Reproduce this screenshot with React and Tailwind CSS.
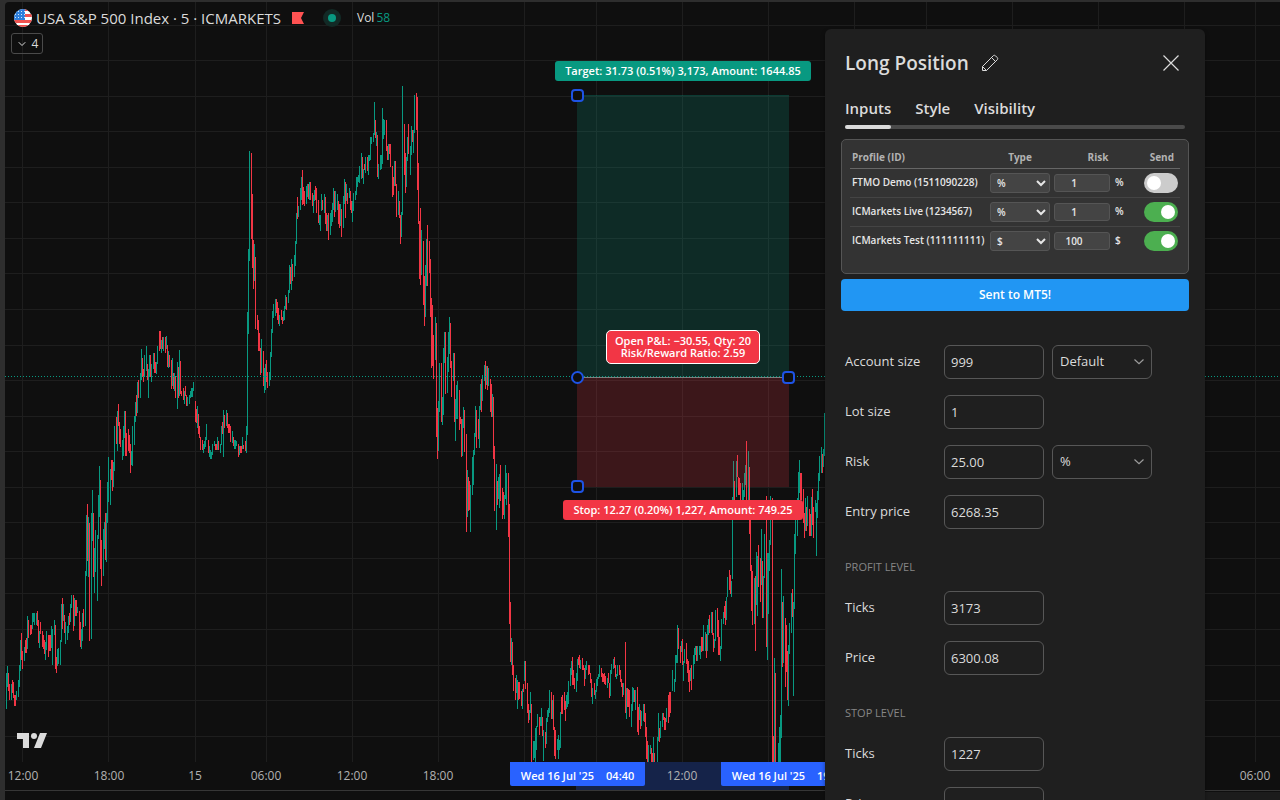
import { useState } from "react";
import { ChevronDown } from "lucide-react";

// price bars as [x, high, low], a negative x marks a falling bar
const BARS = [
  [6,673,709],[7,666,687],[-8,673,691],[-9,684,700],[11,684,700],[-12,680,693],[-13,682,698],[-14,695,706],[-15,695,706],[16,691,700],
  [18,680,697],[19,665,687],[20,640,671],[-21,633,660],[-22,651,669],[24,647,661],[-25,640,653],[-26,638,653],[27,616,649],[-28,620,638],
  [-30,625,635],[-31,625,634],[32,613,629],[33,613,622],[34,613,625],[36,613,625],[-37,611,626],[-38,620,643],[39,631,648],[-40,622,634],
  [-42,631,647],[-43,635,649],[-44,640,654],[45,642,660],[46,631,650],[-48,635,657],[-49,635,651],[-50,635,651],[51,626,648],[52,629,665],
  [54,620,635],[-55,625,669],[-56,657,673],[57,649,666],[58,648,664],[60,640,665],[61,604,642],[-62,598,629],[63,604,621],[-64,615,633],
  [65,622,644],[67,626,640],[68,616,633],[-69,613,625],[70,604,622],[71,595,608],[-73,595,631],[74,598,626],[-75,600,616],[-76,600,616],
  [77,607,613],[-79,611,640],[-80,622,647],[81,629,649],[82,613,641],[-83,609,627],[85,571,626],[86,515,576],[-87,504,561],[88,517,577],
  [-89,523,641],[91,513,639],[92,490,541],[-93,513,577],[94,548,593],[95,530,572],[97,535,601],[98,495,539],[99,466,517],[-100,480,569],
  [-101,540,586],[103,529,576],[104,522,549],[-105,513,560],[106,513,562],[107,482,523],[108,457,502],[110,469,505],[-111,460,480],[-112,460,491],
  [113,462,487],[114,426,471],[-116,417,444],[117,411,451],[-118,404,426],[-119,422,444],[-120,429,447],[122,440,460],[123,426,456],[124,411,438],
  [-125,411,456],[-126,433,456],[-128,429,451],[-129,435,453],[-130,444,473],[131,451,465],[132,426,466],[134,416,445],[135,402,422],[-136,395,416],
  [137,382,413],[-138,380,398],[140,373,398],[141,349,380],[-142,358,377],[-143,369,382],[144,355,377],[146,346,371],[-147,364,380],[148,369,398],
  [149,355,377],[-150,355,377],[151,364,382],[153,353,369],[-154,353,373],[-155,362,373],[156,362,374],[157,346,364],[-159,331,351],[-160,331,349],
  [161,340,353],[-162,337,349],[163,337,351],[-165,337,353],[166,336,349],[-167,345,367],[168,351,368],[-169,355,367],[-171,360,389],[172,358,386],
  [-173,373,389],[174,373,391],[-175,376,398],[177,362,409],[-178,367,398],[179,350,396],[-180,361,394],[-181,391,396],[-183,388,400],[184,391,404],
  [-185,386,396],[-186,395,406],[187,397,406],[189,395,404],[190,391,398],[191,388,397],[192,388,397],[193,382,391],[-195,401,422],[-196,409,423],
  [197,406,428],[-198,414,434],[-199,426,438],[-200,437,450],[-202,440,450],[203,444,453],[204,441,449],[205,437,447],[206,424,440],[-208,440,453],
  [209,446,457],[210,450,459],[211,452,459],[212,444,455],[214,441,446],[-215,444,450],[-216,444,450],[217,437,450],[-218,441,450],[220,444,453],
  [221,426,445],[-222,422,434],[223,410,457],[-224,415,428],[226,410,426],[-227,413,428],[-228,424,433],[-229,424,433],[-230,426,442],[232,431,443],
  [-233,437,446],[234,440,449],[235,440,449],[236,441,446],[-238,444,457],[239,446,455],[-240,446,453],[-241,446,453],[242,437,449],[-243,445,449],
  [-245,441,451],[246,426,453],[247,312,435],[248,249,334],[249,151,261],[-251,153,239],[-252,194,268],[-253,240,289],[254,244,281],[-255,257,329],
  [-257,315,330],[-258,320,351],[-259,333,351],[-260,348,375],[261,339,373],[-263,351,386],[264,368,393],[265,364,390],[-266,360,382],[-267,372,388],
  [269,372,386],[270,352,380],[271,329,357],[272,311,333],[273,304,318],[275,299,316],[-276,299,313],[-277,302,320],[-278,308,324],[279,315,326],
  [-281,310,320],[-282,317,324],[283,311,321],[284,306,320],[285,295,309],[-286,297,310],[288,290,303],[289,265,293],[-290,267,284],[291,259,290],
  [-292,264,281],[294,255,277],[295,241,266],[296,213,244],[-297,197,219],[298,206,217],[300,188,210],[301,177,200],[-302,170,205],[-303,187,204],
  [-304,191,206],[306,186,204],[307,184,197],[-308,184,199],[309,182,200],[-310,182,200],[-312,193,206],[313,195,213],[314,190,201],[-315,186,200],
  [-316,188,213],[-318,200,223],[319,215,225],[320,215,231],[321,194,211],[-322,200,210],[324,194,213],[-325,197,224],[-326,213,231],[327,215,231],
  [-328,213,240],[330,213,235],[331,210,226],[332,203,222],[333,188,210],[-334,191,217],[335,191,212],[337,194,210],[-338,201,224],[-339,204,228],
  [340,204,226],[-341,209,237],[343,196,228],[344,179,204],[-345,182,218],[346,184,201],[-347,193,204],[349,188,198],[-350,191,210],[-351,201,213],
  [352,201,222],[353,193,211],[355,191,200],[356,177,195],[357,177,187],[358,175,182],[359,166,183],[361,153,179],[-362,157,178],[363,169,184],
  [-364,164,170],[365,157,173],[-367,157,171],[368,155,175],[369,155,161],[370,137,160],[371,137,144],[373,133,142],[374,102,135],[-375,120,138],
  [376,132,146],[-377,135,177],[378,164,179],[380,155,170],[381,155,169],[382,108,164],[383,119,139],[384,120,135],[-386,120,151],[-387,146,160],
  [388,144,160],[-389,144,154],[-390,144,167],[-392,166,197],[-393,177,195],[394,161,186],[-395,161,186],[-396,184,217],[398,191,215],[-399,201,218],
  [-400,215,244],[401,212,237],[402,86,215],[-404,124,175],[-405,153,193],[406,157,187],[407,137,161],[-408,124,154],[410,146,175],[411,126,155],
  [-412,130,142],[413,130,153],[414,95,133],[-416,93,130],[-417,97,190],[-418,163,224],[-419,221,279],[-420,208,285],[421,230,275],[-423,241,305],
  [-424,276,326],[425,265,317],[426,239,286],[-427,225,286],[-429,241,273],[-430,259,317],[-431,298,368],[-432,305,366],[-433,335,379],[435,317,360],
  [-436,323,437],[-437,408,459],[438,401,451],[439,363,412],[-441,363,422],[442,397,425],[443,348,415],[444,332,363],[-445,332,394],[447,357,393],
  [448,332,372],[449,317,354],[-450,323,368],[-451,361,397],[453,353,381],[-454,353,422],[455,399,441],[456,385,419],[457,381,419],[-459,390,430],
  [-460,417,424],[-461,419,457],[462,419,456],[463,407,428],[-464,410,452],[-466,434,532],[467,470,517],[-468,477,511],[-469,481,510],[470,485,532],
  [472,457,495],[473,450,485],[474,433,455],[475,406,437],[-476,410,448],[-478,419,439],[479,406,448],[480,384,410],[-481,379,412],[482,375,401],
  [484,365,381],[-485,361,389],[486,366,385],[-487,366,390],[488,368,386],[-490,379,412],[-491,384,417],[492,394,417],[-493,397,459],[-494,446,511],
  [496,464,530],[-497,481,505],[498,477,499],[499,474,508],[-500,465,501],[-502,488,519],[-503,492,515],[504,495,519],[505,465,499],[506,473,505],
  [-508,473,537],[-509,504,624],[-510,602,662],[511,638,665],[-512,642,675],[-513,665,691],[-515,678,700],[516,675,693],[517,680,709],[-518,682,700],
  [-519,682,699],[-521,691,706],[522,689,709],[-523,684,692],[524,661,681],[-525,661,689],[-527,683,713],[-528,704,723],[529,710,720],[530,692,713],
  [-531,704,762],[533,741,760],[534,741,758],[535,728,762],[536,726,750],[537,714,727],[-539,717,735],[540,717,726],[541,708,726],[-542,717,736],
  [543,730,761],[-545,732,748],[546,718,744],[547,710,722],[548,708,717],[549,690,713],[-551,692,719],[552,700,719],[-553,695,730],[-554,727,756],
  [-555,730,759],[557,739,750],[558,735,759],[559,740,750],[560,712,748],[-561,697,714],[-562,695,714],[-564,692,710],[-565,701,721],[566,695,709],
  [567,692,707],[568,681,704],[570,668,686],[571,661,675],[-572,657,685],[-573,670,685],[-574,678,689],[576,673,692],[577,659,681],[-578,657,665],
  [-579,655,668],[580,660,669],[-582,658,670],[-583,665,670],[-584,668,686],[585,665,679],[586,661,670],[-588,665,675],[-589,665,674],[-590,673,683],
  [-591,679,697],[592,688,704],[-594,683,695],[595,690,699],[596,679,692],[597,677,686],[598,674,679],[599,665,677],[-601,668,677],[-602,673,682],
  [-603,674,682],[-604,673,684],[-605,676,685],[607,678,688],[-608,673,683],[-609,683,698],[610,670,696],[611,664,674],[613,659,669],[-614,657,668],
  [-615,665,677],[616,674,679],[617,665,676],[-619,665,675],[-620,670,682],[-621,679,687],[-622,683,697],[623,683,695],[-625,642,713],[626,688,719],
  [-627,688,707],[-628,689,707],[-629,690,717],[631,704,727],[632,687,711],[633,688,702],[-634,690,702],[635,690,710],[-637,687,732],[-638,707,735],
  [639,704,720],[-640,710,729],[641,711,726],[643,704,721],[-644,704,722],[-645,713,737],[-646,727,759],[-647,741,762],[648,745,762],[650,745,754],
  [-651,748,762],[-652,753,762],[653,737,762],[-654,753,762],[657,737,762],[658,713,741],[-659,728,742],[660,721,738],[662,713,727],[-663,713,720],
  [-664,717,730],[-665,718,730],[666,708,722],[-668,695,723],[-669,692,717],[-670,692,713],[672,670,691],[674,679,692],[675,655,682],[676,655,663],
  [677,625,663],[-678,628,649],[-680,646,663],[681,641,652],[-682,639,665],[683,661,681],[684,649,663],[-686,643,664],[-687,659,673],[-688,661,682],
  [-689,670,692],[690,668,681],[-691,665,690],[693,655,679],[694,648,664],[695,646,655],[-696,646,661],[697,646,661],[699,646,655],[700,646,659],
  [-701,637,652],[-702,637,651],[703,625,651],[705,632,651],[-706,634,658],[707,625,651],[708,619,635],[-709,615,633],[711,612,633],[-712,612,635],
  [-713,633,652],[714,639,648],[715,610,641],[-717,608,637],[-718,620,655],[-719,637,655],[720,646,661],[721,619,649],[723,612,624],[-724,606,618],
  [-725,601,625],[726,597,620],[727,577,597],[-729,570,590],[-730,575,594],[731,581,597],[732,497,579],[733,461,505],[-734,481,500],[736,461,497],
  [-737,455,477],[-738,477,495],[-739,478,495],[-740,483,500],[742,483,500],[743,490,500],[744,473,497],[745,465,485],[-746,441,500],[748,451,500],
  [-749,467,534],[-750,520,571],[-751,565,611],[-752,571,625],[754,578,624],[-755,576,651],[756,552,605],[757,556,616],[-758,545,587],[-760,558,602],
  [761,529,585],[-762,561,618],[763,576,618],[764,534,578],[-766,496,647],[767,553,660],[768,553,614],[769,540,571],[770,496,545],[-772,498,762],
  [-773,736,762],[774,658,762],[-775,673,762],[778,743,762],[779,727,762],[780,715,762],[781,569,738],[-782,602,667],[783,596,663],[-785,618,687],
  [-786,625,672],[-787,651,700],[788,645,706],[789,623,654],[791,593,633],[-792,589,617],[793,602,696],[794,534,609],[795,520,554],[797,498,536],
  [798,472,500],[799,460,493],[-800,473,500],[-801,473,500],[-803,489,523],[-804,513,538],[805,498,531],[-806,507,531],[807,496,526],[-809,509,536],
  [-810,514,536],[811,497,536],[-812,489,525],[-813,507,538],[815,500,512],[816,503,556],[817,491,518],[818,473,500],[819,456,481],[821,447,473],
  [-822,454,473],[823,449,467],[824,413,456],
];

const toPath = (bars) =>
  bars.map(([x, top, bottom]) => `M${Math.abs(x)} ${top}h1V${bottom}h-1z`).join("");

const UP_PATH = toPath(BARS.filter(([x]) => x > 0));
const DOWN_PATH = toPath(BARS.filter(([x]) => x < 0));

const GRID_Y = [25, 60, 96, 131, 167, 202, 238, 273, 309, 345, 380, 416, 451, 487, 522, 558, 593, 629, 665, 700, 736];
const GRID_X = [22, 108, 195, 266, 352, 438, 524, 596, 682, 768, 854, 926, 1012, 1098, 1184, 1255];

const TIMES = [
  { x: 23, label: "12:00" },
  { x: 109, label: "18:00" },
  { x: 195, label: "15" },
  { x: 266, label: "06:00" },
  { x: 352, label: "12:00" },
  { x: 438, label: "18:00" },
  { x: 682, label: "12:00" },
  { x: 1255, label: "06:00" },
];

const PROFILES = [
  { id: "1511090228", name: "FTMO Demo", type: "%", risk: "1", send: false },
  { id: "1234567", name: "ICMarkets Live", type: "%", risk: "1", send: true },
  { id: "111111111", name: "ICMarkets Test", type: "$", risk: "100", send: true },
];

function Chart() {
  return (
    <svg className="absolute inset-0 h-full w-full" shapeRendering="crispEdges" aria-label="Price chart">
      <g fill="#1e1e1e">
        {GRID_Y.map((y) => (
          <rect key={y} x="5" y={y} width="100%" height="1" />
        ))}
        {GRID_X.map((x) => (
          <rect key={x} x={x} y="2" width="1" height="760" />
        ))}
      </g>
      <rect x="576" y="762" width="213" height="28" fill="#152349" />
      <rect x="5" y="790" width="100%" height="1" fill="#363636" />
      <rect x="1205" y="792" width="100%" height="8" fill="#1c1c1c" />
      <path d={UP_PATH} fill="#089981" />
      <path d={DOWN_PATH} fill="#f23645" />
      <rect x="577" y="95" width="212" height="282" fill="#089981" fillOpacity="0.2" />
      <rect x="577" y="95" width="212" height="1" fill="#089981" fillOpacity="0.15" />
      <rect x="577" y="377" width="212" height="110" fill="#f23645" fillOpacity="0.2" />
      <rect x="577" y="377" width="212" height="1" fill="#808080" />
      <line x1="5" x2="100%" y1="376.5" y2="376.5" stroke="#089981" strokeDasharray="1 2" />
      <g fill="#0f0f0f" stroke="#1e53e5" strokeWidth="2" shapeRendering="auto">
        <rect x="572" y="90" width="11" height="11" rx="3" />
        <rect x="572" y="481" width="11" height="11" rx="3" />
        <rect x="783" y="372" width="11" height="11" rx="3" />
        <circle cx="577.5" cy="377.5" r="5.5" />
      </g>
      <g fill="#b2b2b2" fontSize="12" textAnchor="middle">
        {TIMES.map((t) => (
          <text key={t.x} x={t.x} y="780">{t.label}</text>
        ))}
      </g>
      <g fill="#dbdbdb" shapeRendering="auto">
        <path d="M17 733h12v15h-6v-9h-6z" />
        <circle cx="34" cy="736" r="3" />
        <path d="M40 733h7l-6 15h-7z" />
      </g>
    </svg>
  );
}

function FlagIcon() {
  return (
    <svg className="h-[18px] w-[18px] shrink-0" viewBox="0 0 18 18" aria-hidden="true">
      <clipPath id="round">
        <circle cx="9" cy="9" r="9" />
      </clipPath>
      <g clipPath="url(#round)">
        <path fill="#fff" d="M0 0h18v18H0z" />
        <path fill="#f0524f" d="M9 0h9v2H9zM9 5h9v3H9zM0 11h18v3H0zM0 16h18v2H0z" />
        <path fill="#2e7fdc" d="M0 0h11v11H0z" />
        <path stroke="#cfe4fb" strokeDasharray="1 2" d="M1 2.5h10M1 5.5h10M1 8.5h10" />
      </g>
    </svg>
  );
}

function Legend() {
  return (
    <div className="absolute left-[11px] top-2 flex flex-col items-start gap-1">
      <div className="flex h-5 items-center pl-[3px]">
        <FlagIcon />
        <h1 className="ml-1 w-[244px] whitespace-nowrap text-[15px] text-[#dbdbdb]">USA S&amp;P 500 Index · 5 · ICMARKETS</h1>
        <svg className="ml-3 h-3 w-3" viewBox="0 0 12 12" aria-hidden="true">
          <path fill="#ff5252" d="M0 0h12L9 6l3 6H0z" />
        </svg>
        <span className="ml-[19px] flex h-[18px] w-[18px] items-center justify-center rounded-full bg-[#122a26]">
          <span className="h-2 w-2 rounded-full bg-[#089981]" />
        </span>
        <span className="ml-4 text-xs text-[#dbdbdb]">Vol</span>
        <span className="ml-0.5 text-xs text-[#089981]">58</span>
      </div>
      <button className="mt-px flex h-[21px] w-8 items-center justify-center gap-1 rounded-[3px] border border-[#4a4a4a] text-xs text-[#dbdbdb]">
        <ChevronDown size={12} />4
      </button>
    </div>
  );
}

function PositionLabels() {
  return (
    <div className="text-[11px] font-semibold text-white">
      <div className="absolute left-[683px] top-[61px] flex h-5 w-64 -translate-x-1/2 items-center justify-center whitespace-nowrap rounded-[3px] bg-[#089981]">
        Target: 31.73 (0.51%) 3,173, Amount: 1644.85
      </div>
      <div className="absolute left-[683px] top-[330px] flex h-[34px] w-[154px] -translate-x-1/2 flex-col items-center justify-center whitespace-nowrap rounded-[5px] border border-white bg-[#f23645] leading-3">
        <span>Open P&amp;L: −30.55, Qty: 20</span>
        <span>Risk/Reward Ratio: 2.59</span>
      </div>
      <div className="absolute left-[683px] top-[500px] flex h-5 w-60 -translate-x-1/2 items-center justify-center whitespace-nowrap rounded-[3px] bg-[#f23645]">
        Stop: 12.27 (0.20%) 1,227, Amount: 749.25
      </div>
      <div className="absolute left-[510px] top-[762px] flex h-6 w-[135px] items-center justify-center gap-3 whitespace-nowrap rounded-b-[2px] bg-[#2962ff] pt-1">
        <span>Wed 16 Jul '25</span>
        <span>04:40</span>
      </div>
      <div className="absolute left-[721px] top-[762px] flex h-6 w-[135px] items-center justify-center gap-3 whitespace-nowrap rounded-b-[2px] bg-[#2962ff] pt-1">
        <span>Wed 16 Jul '25</span>
        <span>19:20</span>
      </div>
    </div>
  );
}

function Toggle({ checked, onChange, label }) {
  return (
    <label className="relative ml-auto block h-5 w-[34px] cursor-pointer">
      <input type="checkbox" checked={checked} onChange={onChange} aria-label={label} className="peer sr-only" />
      <span className="block h-5 rounded-full bg-[#ccc] peer-checked:bg-[#4caf50]" />
      <span className="absolute left-[3px] top-[3px] h-3.5 w-3.5 rounded-full bg-white peer-checked:left-[17px]" />
    </label>
  );
}

function ProfileTable() {
  const [profiles, setProfiles] = useState(PROFILES);

  const update = (id, field, value) =>
    setProfiles(profiles.map((p) => (p.id === id ? { ...p, [field]: value } : p)));

  return (
    <div className="h-[135px] rounded-[5px] border border-[#555] bg-[#333] px-2 pt-2">
      <table className="w-full table-fixed border-collapse text-[10px] font-semibold">
        <colgroup>
          <col className="w-[140px]" />
          <col className="w-16" />
          <col className="w-[60px]" />
          <col className="w-6" />
          <col />
        </colgroup>
        <thead>
          <tr className="h-5 border-b border-[#666] text-[#b2b2b2]">
            <th className="pl-0.5 text-left">Profile (ID)</th>
            <th className="pr-1 text-center">Type</th>
            <th colSpan={2} className="pl-1 text-center">Risk</th>
            <th className="pr-1.5 text-right">Send</th>
          </tr>
        </thead>
        <tbody>
          {profiles.map((p) => (
            <tr key={p.id} className="h-[29px] border-b border-[#444] text-[#e6e6e6] last:border-b-0">
              <td className="whitespace-nowrap pl-0.5">{p.name} ({p.id})</td>
              <td>
                <select
                  aria-label={`Risk type for ${p.name}`}
                  value={p.type}
                  onChange={(e) => update(p.id, "type", e.target.value)}
                  className="block h-5 w-[60px] rounded-[3px] border border-[#555] bg-[#444] px-0.5"
                >
                  <option>%</option>
                  <option>$</option>
                </select>
              </td>
              <td>
                <input
                  aria-label={`Risk for ${p.name}`}
                  value={p.risk}
                  onChange={(e) => update(p.id, "risk", e.target.value)}
                  className="block h-[18px] w-14 rounded-[3px] border border-[#555] bg-[#444] pr-4 text-center"
                />
              </td>
              <td className="pl-px">{p.type}</td>
              <td className="pr-0.5">
                <Toggle
                  checked={p.send}
                  onChange={(e) => update(p.id, "send", e.target.checked)}
                  label={`Send to ${p.name}`}
                />
              </td>
            </tr>
          ))}
        </tbody>
      </table>
    </div>
  );
}

function Field({ id, label, value, option }) {
  return (
    <div className="flex h-[34px] items-center text-[13px] text-[#dbdbdb]">
      <label htmlFor={id} className="w-[99px] shrink-0">{label}</label>
      <input
        id={id}
        defaultValue={value}
        className="h-full w-[100px] rounded-md border border-[#575757] bg-transparent px-1.5"
      />
      {option && (
        <div className="relative ml-2 h-full w-[100px]">
          <select
            aria-label={`${label} unit`}
            className="h-full w-full appearance-none rounded-md border border-[#575757] bg-[#1f1f1f] px-[7px]"
          >
            <option>{option}</option>
          </select>
          <svg className="pointer-events-none absolute right-2 top-3.5 h-1.5 w-2.5" viewBox="0 0 10 6" fill="none" stroke="#9c9c9c" strokeWidth="1.2" aria-hidden="true">
            <path d="M.5.5 5 4.7 9.5.5" />
          </svg>
        </div>
      )}
    </div>
  );
}

function PositionDialog() {
  return (
    <section
      role="dialog"
      aria-labelledby="dialog-title"
      className="absolute bottom-0 right-[75px] top-[29px] w-[380px] overflow-hidden rounded-t-md bg-[#1f1f1f] px-4 shadow-[0_2px_4px_rgba(0,0,0,0.4)]"
    >
      <header className="flex h-[68px] items-center px-1 text-[#dbdbdb]">
        <h2 id="dialog-title" className="text-[19px] font-semibold">Long Position</h2>
        <button aria-label="Rename" className="ml-3">
          <svg className="h-[18px] w-[18px]" viewBox="0 0 18 18" fill="none" stroke="currentColor" aria-hidden="true">
            <path d="M1.5 12.5 12.2 1.8c.7-.7 1.6-.7 2.3 0l1.7 1.7c.7.7.7 1.6 0 2.3L5.5 16.5h-4zM10.5 3.5l4 4M1.5 12.5l4 4" />
          </svg>
        </button>
        <button aria-label="Close" className="ml-auto mr-1.5">
          <svg className="h-4 w-4" viewBox="0 0 16 16" fill="none" stroke="currentColor" strokeWidth="1.2" aria-hidden="true">
            <path d="m.5.5 15 15m0-15-15 15" />
          </svg>
        </button>
      </header>

      <div className="relative mx-1 h-8">
        <div className="absolute inset-x-0 bottom-0 h-1 rounded-sm bg-[#4a4a4a]" />
        <div role="tablist" className="relative flex h-full gap-6 text-[15px] font-semibold text-[#dbdbdb]">
          <button role="tab" aria-selected="true" className="flex flex-col justify-between">
            Inputs
            <span className="h-1 w-full rounded-sm bg-[#dbdbdb]" />
          </button>
          <button role="tab" aria-selected="false" className="flex">Style</button>
          <button role="tab" aria-selected="false" className="flex">Visibility</button>
        </div>
      </div>

      <div className="mt-2.5">
        <ProfileTable />
        <button className="mt-[5px] h-8 w-full rounded bg-[#2196f3] text-xs font-semibold text-white">Sent to MT5!</button>
      </div>

      <form className="mt-[34px] flex flex-col gap-4 px-1">
        <Field id="account" label="Account size" value="999" option="Default" />
        <Field id="lot" label="Lot size" value="1" />
        <Field id="risk" label="Risk" value="25.00" option="%" />
        <Field id="entry" label="Entry price" value="6268.35" />
        <h3 className="mt-3.5 text-[11px] leading-4 text-[#868686]">PROFIT LEVEL</h3>
        <Field id="profit-ticks" label="Ticks" value="3173" />
        <Field id="profit-price" label="Price" value="6300.08" />
        <h3 className="mt-3.5 text-[11px] leading-4 text-[#868686]">STOP LEVEL</h3>
        <Field id="stop-ticks" label="Ticks" value="1227" />
        <Field id="stop-price" label="Price" value="6256.08" />
      </form>
    </section>
  );
}

export default function App() {
  return (
    <main className="h-screen w-full bg-[#2e2e2e] pl-[5px] pt-0.5 font-['Open_Sans','Noto_Sans',sans-serif]">
      <div className="h-full rounded-tl bg-[#0f0f0f]" />
      <div className="absolute inset-0 overflow-hidden">
        <Chart />
        <Legend />
        <PositionLabels />
        <PositionDialog />
      </div>
    </main>
  );
}
